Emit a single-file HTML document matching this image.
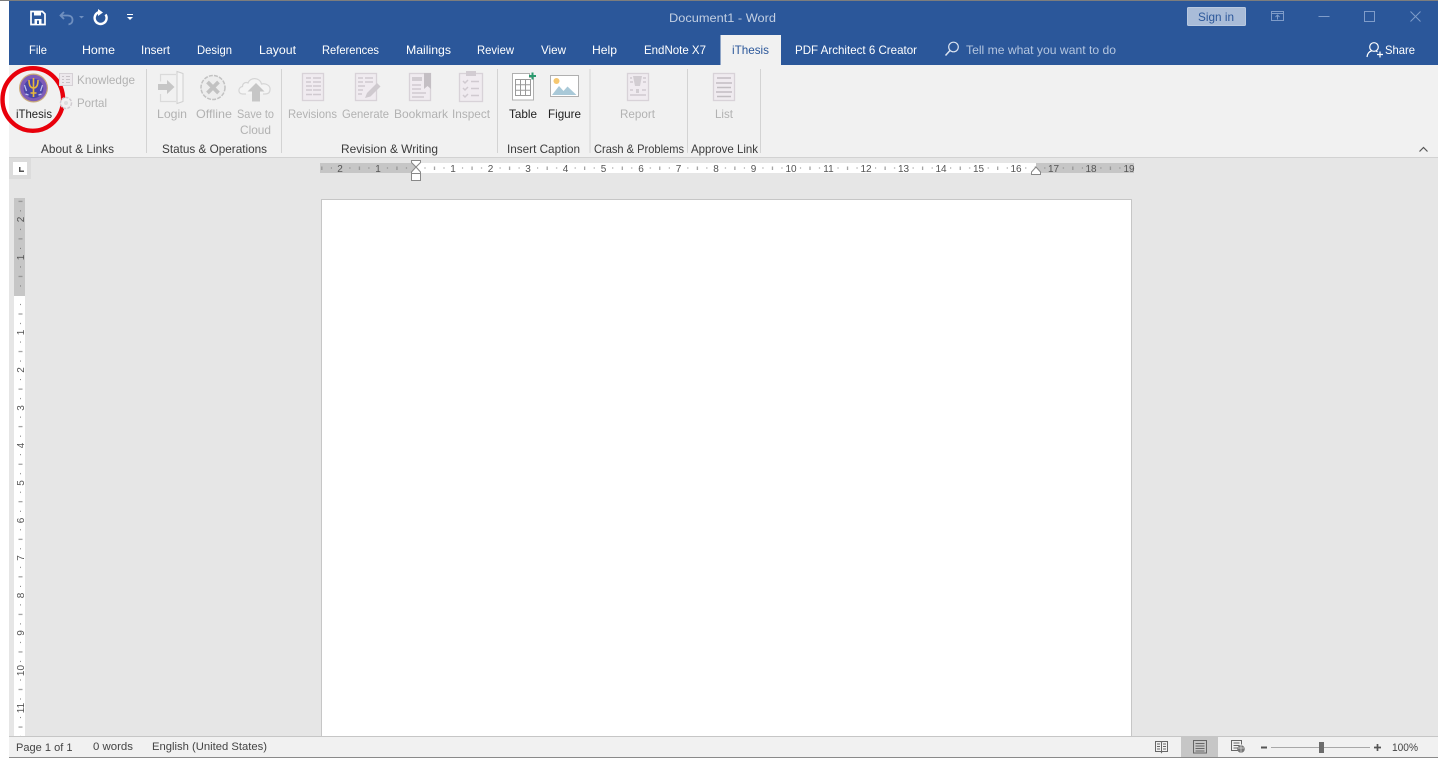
<!DOCTYPE html>
<html><head><meta charset="utf-8"><title>Document1 - Word</title>
<style>
html,body{margin:0;padding:0;background:#fff;width:1438px;height:759px;overflow:hidden}
svg{display:block;position:absolute;left:0;top:0}
text{font-family:"Liberation Sans",sans-serif;font-size:12px}
.tab{fill:#fff}
.dis{fill:#b2b2b2}
.grp{fill:#3c3c3c}
.rn{fill:#555;font-size:10px;text-anchor:middle}
.ic{fill:#f0ebf0;stroke:#d8d2d8;stroke-width:1.3}
.il{stroke:#d0cad0;stroke-width:1.5;fill:none}
</style></head><body>
<svg width="1438" height="759" viewBox="0 0 1438 759" xmlns="http://www.w3.org/2000/svg">
<defs>
<pattern id="hr" x="415.5" y="163" width="37.55" height="10" patternUnits="userSpaceOnUse">
<rect x="9" y="4.5" width="1" height="1" fill="#777"/><rect x="18.5" y="3.5" width="1" height="3.500" fill="#888"/><rect x="28" y="4.5" width="1" height="1" fill="#777"/>
</pattern>
<pattern id="vr" x="14" y="295" width="11" height="37.55" patternUnits="userSpaceOnUse">
<rect x="6" y="9" width="1" height="1" fill="#777"/><rect x="4.500" y="18.5" width="4" height="1" fill="#888"/><rect x="6" y="28" width="1" height="1" fill="#777"/>
</pattern>
</defs>
<rect width="1438" height="759" fill="#fff"/>
<rect x="9" y="0" width="1429" height="65" fill="#2b579a"/>
<rect x="0" y="0" width="1438" height="1" fill="#7d7d7d"/>
<rect x="9" y="65" width="1429" height="92" fill="#f1f1f1"/>
<rect x="9" y="157" width="1429" height="1" fill="#d2d2d2"/>
<rect x="9" y="158" width="1429" height="579" fill="#e6e6e6"/>

<!-- QAT -->
<path d="M31 11.5h11.5l2.5 2.5v10.5h-14z" fill="none" stroke="#fff" stroke-width="1.7"/>
<rect x="34" y="11" width="7" height="4.5" fill="#fff"/><rect x="34.5" y="19" width="7" height="5" fill="#fff"/><rect x="37" y="20.5" width="2" height="3.5" fill="#2b579a"/>
<path d="M64 12l-3.5 3.5 3.5 3.500M61 15.500h6.500c3.500 0 5 2 5 4.500s-1.500 4-4 4.500" fill="none" stroke="#6f8fbf" stroke-width="1.800"/>
<path d="M79 16h5l-2.500 2.500z" fill="#6f8fbf"/>
<path d="M99 12.200a6 6 0 1 0 6.500 2.300" fill="none" stroke="#fff" stroke-width="2.400"/>
<path d="M98 9v7l5-3.500z" fill="#fff"/>
<rect x="127" y="14" width="6" height="1" fill="#fff"/><path d="M127 17h6l-3 3z" fill="#fff"/>
<text x="669" y="22" style="fill:#c3cfe2;font-size:11.500px" textLength="107" lengthAdjust="spacingAndGlyphs">Document1  -  Word</text>

<!-- window controls -->
<rect x="1187.500" y="7.500" width="58" height="18" rx="1" fill="#a9bcd8" stroke="#b9c9e0"/>
<text x="1198" y="21" style="fill:#2b579a" textLength="36" lengthAdjust="spacingAndGlyphs">Sign in</text>
<g fill="none" stroke="#7f9cc9" stroke-width="1">
<rect x="1271.500" y="11.500" width="12" height="9"/><path d="M1271.500 13.500h12M1277.500 19.500v-4M1275.500 17l2-2 2 2"/>
<path d="M1318.500 16.500h11"/><rect x="1364.500" y="11.500" width="10" height="10"/><path d="M1410.500 11.500l10 10M1420.500 11.500l-10 10"/>
</g>

<!-- tabs -->
<rect x="720.500" y="35" width="60.500" height="30" fill="#f1f1f1"/>
<g class="tab">
<text class="tab" x="29" y="54" textLength="18" lengthAdjust="spacingAndGlyphs">File</text>
<text class="tab" x="82" y="54" textLength="33" lengthAdjust="spacingAndGlyphs">Home</text>
<text class="tab" x="141" y="54" textLength="29" lengthAdjust="spacingAndGlyphs">Insert</text>
<text class="tab" x="197" y="54" textLength="35" lengthAdjust="spacingAndGlyphs">Design</text>
<text class="tab" x="259" y="54" textLength="37" lengthAdjust="spacingAndGlyphs">Layout</text>
<text class="tab" x="322" y="54" textLength="57" lengthAdjust="spacingAndGlyphs">References</text>
<text class="tab" x="406" y="54" textLength="45" lengthAdjust="spacingAndGlyphs">Mailings</text>
<text class="tab" x="477" y="54" textLength="37" lengthAdjust="spacingAndGlyphs">Review</text>
<text class="tab" x="541" y="54" textLength="25" lengthAdjust="spacingAndGlyphs">View</text>
<text class="tab" x="592" y="54" textLength="25" lengthAdjust="spacingAndGlyphs">Help</text>
<text class="tab" x="644" y="54" textLength="62" lengthAdjust="spacingAndGlyphs">EndNote X7</text>
<text x="732" y="54" style="fill:#2b579a" textLength="37" lengthAdjust="spacingAndGlyphs">iThesis</text>
<text class="tab" x="795" y="54" textLength="122" lengthAdjust="spacingAndGlyphs">PDF Architect 6 Creator</text>
<text x="966" y="54" style="fill:#b4c5df" textLength="150" lengthAdjust="spacingAndGlyphs">Tell me what you want to do</text>
<text class="tab" x="1385" y="54" textLength="30" lengthAdjust="spacingAndGlyphs">Share</text>
</g>
<circle cx="953.500" cy="47" r="4.800" fill="none" stroke="#dbe3f0" stroke-width="1.200"/>
<path d="M950 50.500l-4.500 5" stroke="#dbe3f0" stroke-width="1.500"/>
<circle cx="1374" cy="47" r="4.300" fill="none" stroke="#fff" stroke-width="1.200"/>
<path d="M1367 57c.5-4 2.500-5.500 4.500-6M1376 51l1.500.8" fill="none" stroke="#fff" stroke-width="1.200"/>
<path d="M1377 54.500h6M1380 51.500v6" stroke="#fff" stroke-width="1.200"/>

<!-- separators -->
<g fill="#d3d3d3">
<rect x="146" y="69" width="1" height="84"/><rect x="281" y="69" width="1" height="84"/><rect x="497" y="69" width="1" height="84"/><rect x="589.500" y="69" width="1" height="84"/><rect x="687" y="69" width="1" height="84"/><rect x="760" y="69" width="1" height="84"/>
</g>

<!-- iThesis logo -->
<circle cx="33.500" cy="88" r="14.500" fill="#c9a97a"/>
<circle cx="33.500" cy="88" r="13.300" fill="#7d5cb8"/>
<circle cx="33.500" cy="88.500" r="9.800" fill="#4a45a8"/>
<path d="M33.500 78v19M29 80c0 6 1.800 8 4.500 8s4.500-2 4.500-8M30.500 93h6" fill="none" stroke="#e8b93a" stroke-width="1.600"/>
<path d="M24.500 85l2 6M42.500 85l-2 6M25.500 94l3 1M41.500 94l-3 1" stroke="#c0c4f0" stroke-width="1.200"/>
<ellipse cx="32.800" cy="99.500" rx="30.300" ry="31.300" fill="none" stroke="#e8000b" stroke-width="4.400"/>
<text x="16" y="118" style="fill:#222" textLength="36" lengthAdjust="spacingAndGlyphs">iThesis</text>

<!-- Knowledge / portal -->
<rect x="59.500" y="73.500" width="13" height="12" fill="#ece8ec" stroke="#d5d0d5"/>
<path d="M62 76.500h2M62 79.500h2M62 82.500h2M66 76.500h4M66 79.500h4M66 82.500h4" stroke="#c8c3c8"/>
<circle cx="66" cy="103" r="5.500" fill="#f1f1f1" stroke="#d0cbd0" stroke-width="1.500" stroke-dasharray="3 1.200"/>
<circle cx="66" cy="103" r="2" fill="#ddd"/>
<text class="dis" x="77" y="84" textLength="58" lengthAdjust="spacingAndGlyphs">Knowledge</text>
<text class="dis" x="77" y="107" textLength="30" lengthAdjust="spacingAndGlyphs">Portal</text>

<!-- Login -->
<path d="M176 74.500h-15.500v7M160.500 94v7.500h15.500" fill="none" stroke="#dadada" stroke-width="1.200"/>
<path d="M158 84h9v-4l7.500 7-7.500 7v-4h-9z" fill="#c6c6c6"/>
<path d="M177 71.500l6 2v28l-6 2z" fill="#f4f4f4" stroke="#cfcfcf"/>
<text class="dis" x="157" y="118" textLength="30" lengthAdjust="spacingAndGlyphs">Login</text>
<!-- Offline -->
<circle cx="213" cy="87.500" r="12" fill="#ededed" stroke="#c2c2c2" stroke-width="1.500" stroke-dasharray="4 1.200"/>
<path d="M207.500 82l11 11M218.500 82l-11 11" stroke="#c2c2c2" stroke-width="3.800"/>
<text class="dis" x="196" y="118" textLength="36" lengthAdjust="spacingAndGlyphs">Offline</text>
<!-- Save to cloud -->
<path d="M246 94h-3.500c-5 0-4.500-7 0-7.500 0-3 3-5 5.500-3.500 2-6 12-6 13.500 1 5-1 9 2 8.500 5.500 0 3-2 4.500-5 4.500h-2" fill="#f4f4f4" stroke="#d5d5d5" stroke-width="1.200"/>
<path d="M256 83l-8.500 8.500h4.500v10h8v-10h4.500z" fill="#c6c6c6"/>
<text class="dis" x="237" y="118" textLength="37" lengthAdjust="spacingAndGlyphs">Save to</text>
<text class="dis" x="240" y="134" textLength="31" lengthAdjust="spacingAndGlyphs">Cloud</text>

<!-- Revisions -->
<rect class="ic" x="302.500" y="73.500" width="21" height="27"/>
<path class="il" d="M306 78h5M313 78h8M306 82h5M313 82h8M306 86h6M313 86h8M306 90h6M313 90h8M306 94.500h6M313 94.500h8"/>
<text class="dis" x="288" y="118" textLength="49" lengthAdjust="spacingAndGlyphs">Revisions</text>
<!-- Generate -->
<rect class="ic" x="355.500" y="73.500" width="21" height="27"/>
<path class="il" d="M358 78h5M365 78h8M358 82h5M365 82h8M358 86h7M358 90h5M358 94h4"/>
<path d="M365 98l2-5 10-10 3.500 3.500-10 10z" fill="#cfcacf"/>
<text class="dis" x="342" y="118" textLength="47" lengthAdjust="spacingAndGlyphs">Generate</text>
<!-- Bookmark -->
<rect class="ic" x="409.500" y="73.500" width="21" height="27"/>
<path d="M424 73h7v16l-3.500-3-3.500 3z" fill="#c4bfc4"/>
<rect x="412" y="77" width="10" height="4" fill="#d2cdd2"/>
<path class="il" d="M412 85h9M412 89h9M412 93h14M412 97h12"/>
<text class="dis" x="394" y="118" textLength="54" lengthAdjust="spacingAndGlyphs">Bookmark</text>
<!-- Inspect -->
<rect class="ic" x="459.500" y="73.500" width="23" height="28"/>
<rect x="466" y="71" width="10" height="5" fill="#d2ccd2"/>
<path class="il" d="M463 81l2 2 3-3M471 81.500h8M463 88l2 2 3-3M471 88.500h8M463 95l2 2 3-3M471 95.500h8"/>
<text class="dis" x="452" y="118" textLength="38" lengthAdjust="spacingAndGlyphs">Inspect</text>

<!-- Table -->
<path d="M512.500 73.500h17v4h4v22.500h-21z" fill="#fff" stroke="#b0b0b0"/>
<path d="M515.500 79.500h15v16h-15zM515.500 84.800h15M515.500 90.200h15M520.500 79.500v16M525.500 79.500v16" fill="none" stroke="#9a9a9a"/>
<path d="M529 76h7M532.500 72.500v7" stroke="#2a9a6e" stroke-width="2"/>
<text x="509" y="118" style="fill:#222" textLength="28" lengthAdjust="spacingAndGlyphs">Table</text>
<!-- Figure -->
<rect x="550.500" y="75.500" width="28" height="21" fill="#fff" stroke="#b0b0b0"/>
<circle cx="556.500" cy="81" r="3" fill="#f6c76f"/>
<path d="M552 95l7-9 4.500 5 4-4.500 9 8.500z" fill="#a9c9d8"/>
<text x="548" y="118" style="fill:#222" textLength="33" lengthAdjust="spacingAndGlyphs">Figure</text>

<!-- Report -->
<rect class="ic" x="627.500" y="73.500" width="21" height="27"/>
<path d="M633 76h9l-2 10h-5zM636 89h3v4h-3z" fill="#d2cdd2"/>
<path class="il" d="M630 78h2M630 82h3M643 78h3M643 82h3M630 90h3M642 90h4M630 95h16"/>
<text class="dis" x="620" y="118" textLength="35" lengthAdjust="spacingAndGlyphs">Report</text>
<!-- List -->
<rect class="ic" x="713.500" y="73.500" width="21" height="27"/>
<path d="M717 78h14M716 83h16M717 87.500h14M716 92h16M717 96.500h14" stroke="#c2bdc2" stroke-width="1.500" fill="none"/>
<text class="dis" x="715" y="118" textLength="18" lengthAdjust="spacingAndGlyphs">List</text>

<!-- group labels -->
<text class="grp" x="41" y="153" textLength="73" lengthAdjust="spacingAndGlyphs">About &amp; Links</text>
<text class="grp" x="162" y="153" textLength="105" lengthAdjust="spacingAndGlyphs">Status &amp; Operations</text>
<text class="grp" x="341" y="153" textLength="97" lengthAdjust="spacingAndGlyphs">Revision &amp; Writing</text>
<text class="grp" x="507" y="153" textLength="73" lengthAdjust="spacingAndGlyphs">Insert Caption</text>
<text class="grp" x="594" y="153" textLength="90" lengthAdjust="spacingAndGlyphs">Crash &amp; Problems</text>
<text class="grp" x="691" y="153" textLength="67" lengthAdjust="spacingAndGlyphs">Approve Link</text>
<path d="M1419.500 151.500l4-4 4 4" fill="none" stroke="#555" stroke-width="1.200"/>

<!-- ruler corner -->
<rect x="9" y="158" width="22" height="21" fill="#dcdcdc"/>
<rect x="13" y="162" width="14" height="13" fill="#fff"/>
<path d="M19 167v5h5v-1.500h-3.500V167z" fill="#555"/>

<!-- horizontal ruler -->
<rect x="320" y="163" width="96" height="10" fill="#c6c6c6"/>
<rect x="416" y="163" width="620" height="10" fill="#fff"/>
<rect x="1036" y="163" width="98" height="10" fill="#c6c6c6"/>
<rect x="320" y="163" width="814" height="10" fill="url(#hr)"/>
<g>
<text class="rn" x="340" y="172">2</text><text class="rn" x="378" y="172">1</text>
<text class="rn" x="453" y="172">1</text><text class="rn" x="490.500" y="172">2</text><text class="rn" x="528" y="172">3</text><text class="rn" x="565.500" y="172">4</text><text class="rn" x="603.500" y="172">5</text><text class="rn" x="641" y="172">6</text><text class="rn" x="678.500" y="172">7</text><text class="rn" x="716" y="172">8</text><text class="rn" x="753.500" y="172">9</text><text class="rn" x="791" y="172">10</text><text class="rn" x="828.500" y="172">11</text><text class="rn" x="866" y="172">12</text><text class="rn" x="903.500" y="172">13</text><text class="rn" x="941" y="172">14</text><text class="rn" x="978.500" y="172">15</text><text class="rn" x="1016" y="172">16</text><text class="rn" x="1053.500" y="172">17</text><text class="rn" x="1091" y="172">18</text><text class="rn" x="1129" y="172">19</text>
</g>
<!-- indent markers -->
<path d="M411.500 160.500h9v2l-4.500 4.500-4.500-4.500zM416 167l4.500 5v1.500h-9V172z" fill="#fff" stroke="#888"/>
<rect x="411.500" y="173.500" width="9" height="7" fill="#fff" stroke="#888"/>
<path d="M1036 167l4.500 5v2.500h-9V172z" fill="#fff" stroke="#888"/>

<!-- vertical ruler -->
<rect x="14" y="198" width="11" height="98" fill="#c6c6c6"/>
<rect x="14" y="296" width="11" height="441" fill="#fff"/>
<rect x="14" y="198" width="11" height="539" fill="url(#vr)"/>
<g>
<text class="rn" transform="translate(24 219.500) rotate(-90)">2</text>
<text class="rn" transform="translate(24 257.500) rotate(-90)">1</text>
<text class="rn" transform="translate(24 332.500) rotate(-90)">1</text>
<text class="rn" transform="translate(24 370) rotate(-90)">2</text>
<text class="rn" transform="translate(24 408) rotate(-90)">3</text>
<text class="rn" transform="translate(24 445.500) rotate(-90)">4</text>
<text class="rn" transform="translate(24 483) rotate(-90)">5</text>
<text class="rn" transform="translate(24 520.500) rotate(-90)">6</text>
<text class="rn" transform="translate(24 558) rotate(-90)">7</text>
<text class="rn" transform="translate(24 595.500) rotate(-90)">8</text>
<text class="rn" transform="translate(24 633) rotate(-90)">9</text>
<text class="rn" transform="translate(24 670.500) rotate(-90)">10</text>
<text class="rn" transform="translate(24 708) rotate(-90)">11</text>
</g>

<!-- page -->
<rect x="321.500" y="199.500" width="810" height="537" fill="#fff" stroke="#c6c6c6"/>

<!-- status bar -->
<rect x="9" y="736" width="1429" height="1" fill="#c6c6c6"/>
<rect x="9" y="737" width="1429" height="20" fill="#f1f1f1"/>
<rect x="9" y="757" width="1429" height="1" fill="#8a8a8a"/>
<text x="16" y="751" style="fill:#444;font-size:11px" textLength="56.500" lengthAdjust="spacingAndGlyphs">Page 1 of 1</text>
<text x="93" y="750" style="fill:#444;font-size:11px" textLength="40" lengthAdjust="spacingAndGlyphs">0 words</text>
<text x="152" y="750" style="fill:#444;font-size:11px" textLength="115" lengthAdjust="spacingAndGlyphs">English (United States)</text>
<rect x="1181" y="737" width="37" height="20" fill="#c6c6c6"/>
<path d="M1155.500 741.500h5.500l.5 1 .5-1h5.500v10h-5.500l-.5 1-.5-1h-5.500zM1161.500 742v10M1157 744h3M1157 746.500h3M1157 749h3M1163 744h3M1163 746.500h3M1163 749h3" fill="none" stroke="#666"/>
<path d="M1193.500 740.500h13v12.500h-13zM1195.500 743.500h9M1195.500 746h9M1195.500 748.500h9M1195.500 751h9" fill="none" stroke="#666"/>
<path d="M1239 750.500h-7.500v-10h10v4M1233.500 743h6M1233.500 745.500h6M1233.500 748h4" fill="none" stroke="#666"/>
<circle cx="1241" cy="749" r="3.800" fill="#777"/>
<path d="M1238 748h6M1241 745.500v7" stroke="#ddd" stroke-width=".7"/>
<rect x="1261" y="746.500" width="6" height="2" fill="#555"/>
<rect x="1271" y="747" width="99" height="1" fill="#a8a8a8"/>
<rect x="1319" y="742" width="5" height="11" fill="#6c6c6c"/>
<path d="M1374 747.500h7M1377.500 744v7" stroke="#555" stroke-width="1.700"/>
<text x="1392" y="751" style="fill:#444;font-size:11px" textLength="26" lengthAdjust="spacingAndGlyphs">100%</text>
</svg>
</body></html>
